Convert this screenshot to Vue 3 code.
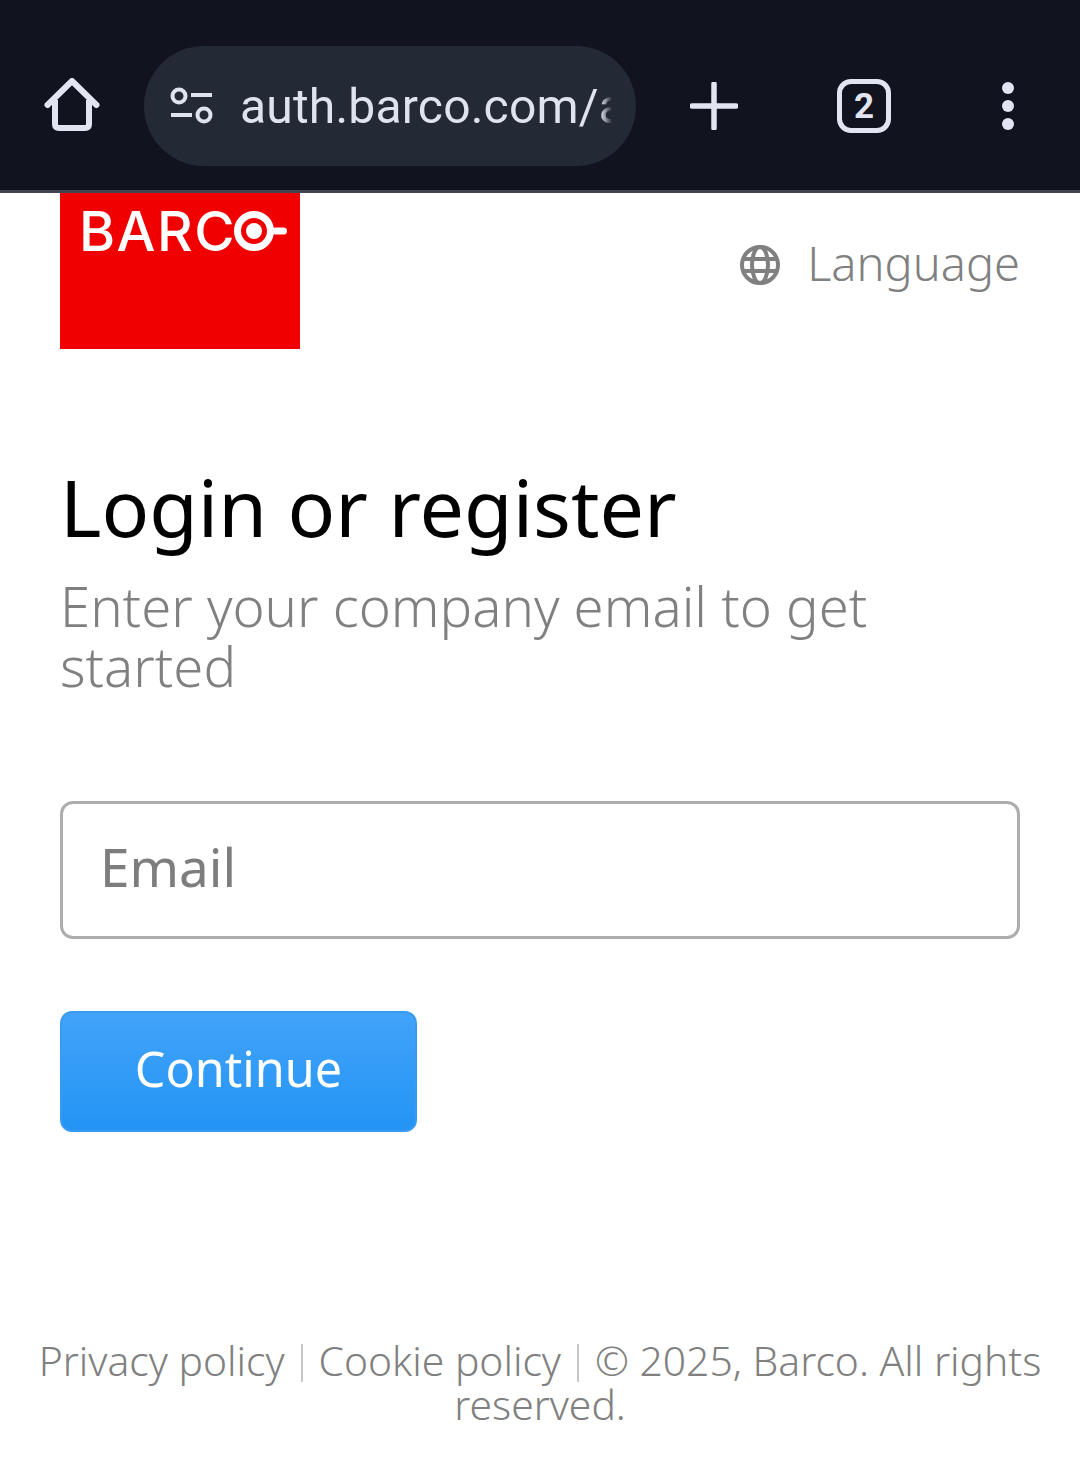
<template>
  <div class="page">
    <div class="browser-bar">
      <svg class="home-icon" viewBox="0 0 56 56" width="56" height="56">
        <path d="M3.500 27 L28 3 L52.500 27" fill="none" stroke="#e2e4f1" stroke-width="6" stroke-linecap="round" stroke-linejoin="round" />
        <path d="M11 22 V46 Q11 50 15 50 H41 Q45 50 45 46 V22" fill="none" stroke="#e2e4f1" stroke-width="6" stroke-linejoin="round" />
      </svg>
      <div class="url-pill">
        <svg class="tune-icon" viewBox="0 0 46 40" width="46" height="40">
          <circle cx="10" cy="10" r="6.500" fill="none" stroke="#dfe2ef" stroke-width="4" />
          <rect x="22" y="7" width="21" height="4" fill="#dfe2ef" />
          <rect x="2" y="27" width="21" height="4" fill="#dfe2ef" />
          <circle cx="35" cy="29" r="6.500" fill="none" stroke="#dfe2ef" stroke-width="4" />
        </svg>
        <span class="url-text">auth.barco.com/auth</span>
      </div>
      <svg class="plus-icon" viewBox="0 0 48 48" width="48" height="48">
        <path d="M24 2 V46 M2 24 H46" stroke="#e2e4f1" stroke-width="5.500" stroke-linecap="round" />
      </svg>
      <div class="tabs-count">2</div>
      <svg class="more-icon" viewBox="0 0 12 48" width="12" height="48">
        <circle cx="6" cy="6" r="6" fill="#e2e4f1" />
        <circle cx="6" cy="24" r="6" fill="#e2e4f1" />
        <circle cx="6" cy="42" r="6" fill="#e2e4f1" />
      </svg>
    </div>

    <header class="site-header">
      <div class="logo">
        <span class="logo-word">BARC</span>
        <svg class="logo-lens" viewBox="0 0 62 42" width="62" height="42">
          <circle cx="20" cy="21" r="16.500" fill="#f00000" stroke="#fff" stroke-width="7" />
          <circle cx="20" cy="21" r="8" fill="#fff" />
          <rect x="38" y="17.500" width="15" height="7" rx="3.500" fill="#fff" />
        </svg>
      </div>
      <div class="language">
        <svg class="globe" viewBox="0 0 40 40" width="40" height="40">
          <g fill="none" stroke="#808080" stroke-width="4">
            <circle cx="20" cy="20" r="18" />
            <ellipse cx="20" cy="20" rx="8" ry="18" />
            <path d="M3 14 H37 M3 26 H37" />
          </g>
        </svg>
        <span>Language</span>
      </div>
    </header>

    <main class="content">
      <h1 class="title">Login or register</h1>
      <p class="subtitle">Enter your company email to get started</p>
      <div class="email-input">Email</div>
      <button class="continue-btn">Continue</button>
    </main>

    <footer class="footer">
      <a>Privacy policy</a><span class="sep"></span><a>Cookie policy</a><span class="sep"></span>© 2025, Barco. All rights reserved.
    </footer>
  </div>
</template>

<script setup>
</script>

<style>
html, body {
  margin: 0;
  background: #ffffff;
}
</style>

<style scoped>
.page {
  width: 1080px;
  height: 1463px;
  overflow: hidden;
  background: #ffffff;
  font-family: 'Noto Sans', 'Lato', sans-serif;
  display: flex;
  flex-direction: column;
}

/* browser chrome */
.browser-bar {
  flex-shrink: 0;
  background: #11141e;
  border-bottom: 3px solid #44464f;
  display: flex;
  align-items: center;
  padding-top: 22px;
  box-sizing: border-box;
  height: 193px;
}

.home-icon {
  margin-left: 44px;
  flex-shrink: 0;
}

.url-pill {
  width: 492px;
  height: 120px;
  margin-left: 44px;
  border-radius: 60px;
  background: #242936;
  display: flex;
  align-items: center;
  flex-shrink: 0;
  box-sizing: border-box;
  padding: 0 24px 0 25px;
}

.tune-icon {
  flex-shrink: 0;
}

.url-text {
  margin-left: 25px;
  font-family: 'Roboto', sans-serif;
  font-size: 48px;
  letter-spacing: 0.2px;
  color: #dfe2ef;
  white-space: nowrap;
  overflow: hidden;
  width: 372px;
  -webkit-mask-image: linear-gradient(to right, #000 97%, transparent 100%);
  mask-image: linear-gradient(to right, #000 97%, transparent 100%);
}

.plus-icon {
  margin-left: 54px;
  flex-shrink: 0;
}

.tabs-count {
  margin-left: 99px;
  width: 54px;
  height: 54px;
  box-sizing: border-box;
  border: 5px solid #e2e4f1;
  border-radius: 14px;
  color: #e2e4f1;
  font-family: 'Roboto', sans-serif;
  font-weight: 700;
  font-size: 35px;
  display: flex;
  align-items: center;
  justify-content: center;
  flex-shrink: 0;
}

.more-icon {
  margin-left: 111px;
  flex-shrink: 0;
}

/* header */
.site-header {
  display: flex;
  justify-content: space-between;
  padding: 0 60px;
  flex-shrink: 0;
}

.logo {
  width: 240px;
  height: 156px;
  background: #f00000;
  display: flex;
  align-items: flex-start;
  box-sizing: border-box;
  padding: 17px 0 0 19px;
}

.logo-word {
  font-family: 'Inter', sans-serif;
  font-weight: 500;
  font-size: 55px;
  line-height: 42px;
  color: #ffffff;
  letter-spacing: 1.500px;
}

.logo-lens {
  margin-left: -2px;
  flex-shrink: 0;
}

.language {
  display: flex;
  align-items: center;
  gap: 27px;
  height: 140px;
  color: #808080;
  font-size: 47px;
  font-weight: 300;
}

.globe {
  margin-top: 3px;
}

/* form */
.content {
  padding: 0 60px;
  flex-shrink: 0;
  display: flex;
  flex-direction: column;
  align-items: flex-start;
}

.title {
  margin: 113px 0 0;
  font-size: 79px;
  line-height: 90px;
  font-weight: 400;
  color: #000000;
}

.subtitle {
  margin: 24px 0 0;
  width: 880px;
  font-size: 54.500px;
  line-height: 60px;
  font-weight: 300;
  color: #808080;
}

.email-input {
  margin-top: 105px;
  width: 960px;
  height: 138px;
  box-sizing: border-box;
  border: 3px solid #adadad;
  border-radius: 13px;
  padding: 0 0 8px 37px;
  display: flex;
  align-items: center;
  font-size: 53px;
  color: #7d7d7d;
}

.continue-btn {
  margin-top: 72px;
  width: 357px;
  height: 121px;
  box-sizing: border-box;
  border: 2px solid #3a9af0;
  border-radius: 12px;
  background: linear-gradient(to bottom, #42a3f9, #2394f5);
  color: #ffffff;
  font-family: inherit;
  font-size: 48.500px;
  padding: 0 0 8px;
}

.footer {
  margin-top: 206px;
  padding: 0 30px;
  text-align: center;
  font-size: 40.800px;
  line-height: 44px;
  font-weight: 300;
  color: #808080;
}

.sep {
  display: inline-block;
  width: 2px;
  height: 38px;
  margin: 0 16px;
  background: #c8c8c8;
  vertical-align: -6px;
}
</style>
